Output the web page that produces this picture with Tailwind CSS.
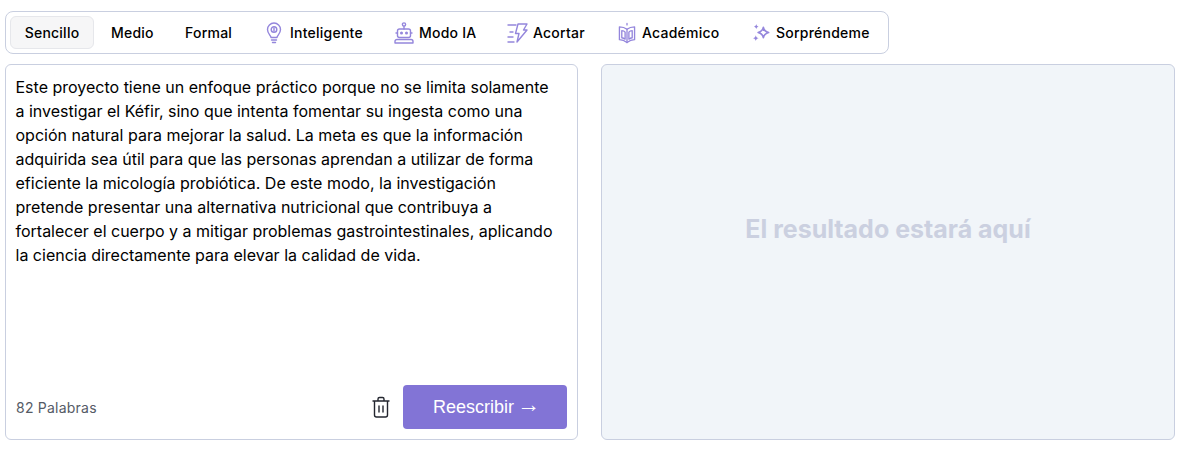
<!DOCTYPE html>
<html>
<head>
<meta charset="utf-8">
<script src="https://cdn.jsdelivr.net/npm/@tailwindcss/browser@4"></script>
</head>
<body class="bg-white font-[Inter,sans-serif] text-black w-[1181px] h-[450px] overflow-hidden">
<div class="pl-[5px] pr-[6px] pt-[11px]">
  <div class="w-[884px] h-[43px] border border-[#c9cfe0] rounded-lg flex items-center pl-[4px] text-[14px] tracking-[0.23px] font-medium whitespace-nowrap">
    <div class="h-[33px] w-[84px] flex items-center justify-center bg-[#f6f6f7] border border-[#e6e7eb] rounded-md">Sencillo</div>
    <div class="ml-[17px] w-[43px]">Medio</div>
    <div class="ml-[31px] w-[47px]">Formal</div>
    <div class="ml-[33px] flex items-center gap-[7px]">
      <svg class="w-[18px] h-[22px]" viewBox="0 0 18 22" fill="none" stroke="#9486dc" stroke-width="1.400" stroke-linecap="round" stroke-linejoin="round"><path d="M6 15.500c0-2-3.500-3.500-3.500-8a6.500 6.500 0 0 1 13 0c0 4.500-3.500 6-3.500 8z"/><circle cx="9" cy="7.500" r="2.800"/><path d="M9 6v3M6.500 18h5M7.500 20.500h3"/></svg>
      <span class="w-[72px]">Inteligente</span>
    </div>
    <div class="ml-[32px] flex items-center gap-[5px]">
      <svg class="w-[20px] h-[22px]" viewBox="0 0 20 22" fill="none" stroke="#9486dc" stroke-width="1.400" stroke-linecap="round" stroke-linejoin="round"><circle cx="10" cy="2.500" r="1.600"/><path d="M10 4v3"/><rect x="3.500" y="7" width="13" height="8.500" rx="2"/><circle cx="7.500" cy="11" r=".8" fill="#9486dc"/><circle cx="12.500" cy="11" r=".8" fill="#9486dc"/><path d="M3.500 11H2M16.500 11H18M1 21v-1.500a2 2 0 0 1 2-2h14a2 2 0 0 1 2 2V21z"/></svg>
      <span class="w-[57px]">Modo IA</span>
    </div>
    <div class="ml-[31px] flex items-center gap-[5px]">
      <svg class="w-[21px] h-[22px]" viewBox="0 0 21 22" fill="none" stroke="#9486dc" stroke-width="1.400" stroke-linecap="round" stroke-linejoin="round"><path d="M11 2h9l-3.500 6H20L10 20l2-8.500H8.500z"/><path d="M1 3h8M3 10h3M1 15h5M1 20h6"/></svg>
      <span class="w-[52px]">Acortar</span>
    </div>
    <div class="ml-[33px] flex items-center gap-[6px]">
      <svg class="w-[18px] h-[22px]" viewBox="0 0 19 22" fill="none" stroke="#9486dc" stroke-width="1.400" stroke-linecap="round" stroke-linejoin="round"><path d="M9.500 7C7 5 4 4.500 1.500 4.500V18c3 0 5.500 1 8 3 2.500-2 5-3 8-3V4.500C15 4.500 12 5 9.500 7z"/><path d="M9.500 7v14M4 8.500c1.500 0 2.800.6 3.500 1.500v7.500c-1-.8-2.200-1.300-3.500-1.500zM15 8.500c-1.500 0-2.800.6-3.500 1.500v7.500c1-.8 2.200-1.300 3.500-1.500zM9.500 1v1.500"/></svg>
      <span class="w-[77px]">Académico</span>
    </div>
    <div class="ml-[33px] flex items-center gap-[6px]">
      <svg class="w-[18px] h-[19px]" viewBox="0 0 19 20" fill="#9486dc"><path d="M12 4.500c.5 3 1.800 4.500 5.500 5.500-3.700 1-5 2.500-5.500 5.500-.5-3-1.800-4.500-5.500-5.500 3.700-1 5-2.500 5.500-5.500z" fill="none" stroke="#9486dc" stroke-width="1.800" stroke-linejoin="round"/><path d="M4.500 1c.3 1.700 1 2.400 2.500 2.800-1.500.4-2.200 1.100-2.500 2.800C4.200 4.900 3.500 4.200 2 3.800 3.500 3.400 4.200 2.700 4.500 1zM4 13c.3 1.800 1.100 2.700 3 3-1.900.3-2.700 1.200-3 3-.3-1.800-1.100-2.700-3-3 1.900-.3 2.700-1.200 3-3z"/></svg>
      <span>Sorpréndeme</span>
    </div>
  </div>
  <div class="mt-[10px] flex gap-[23px]">
    <div class="w-[573px] h-[376px] border border-[#c9cfe0] rounded-md flex flex-col pl-[10px] pr-[10px] pt-[10px] pb-[10px]">
      <p class="text-[16px] leading-[24px] font-normal w-[545px] -ml-[0.5px]">Este proyecto tiene un enfoque práctico porque no se limita solamente a investigar el Kéfir, sino que intenta fomentar su ingesta como una opción natural para mejorar la salud. La meta es que la información adquirida sea útil para que las personas aprendan a utilizar de forma eficiente la micología probiótica. De este modo, la investigación pretende presentar una alternativa nutricional que contribuya a fortalecer el cuerpo y a mitigar problemas gastrointestinales, aplicando la ciencia directamente para elevar la calidad de vida.</p>
      <div class="mt-auto flex items-center">
        <span class="text-[14px] tracking-[0.23px] text-[#555b66]">82 Palabras</span>
        <svg class="ml-auto mr-[12px] w-[20px] h-[22px]" viewBox="0 0 20 22" fill="none" stroke="#23262f" stroke-width="1.400" stroke-linecap="round" stroke-linejoin="round"><path d="M2 5h16M7 5V3a1.500 1.500 0 0 1 1.500-1.500h3A1.500 1.500 0 0 1 13 3v2M3.500 5v14a2 2 0 0 0 2 2h9a2 2 0 0 0 2-2V5M8 10v6M12 10v6"/></svg>
        <div class="w-[164px] h-[44px] bg-[#8274d6] rounded-[4px] flex items-center justify-center gap-[3px] pl-[3px] text-white text-[18px] font-['Liberation_Sans',sans-serif]"><span>Reescribir</span><span class="text-[23px] leading-none -translate-y-[3px]">→</span></div>
      </div>
    </div>
    <div class="w-[574px] h-[376px] border border-[#c9cfe0] bg-[#f1f5f9] rounded-md flex items-center justify-center pb-[44px]">
      <span class="text-[25px] font-bold text-[#cbd0e0]">El resultado estará aquí</span>
    </div>
  </div>
</div>
</body>
</html>
